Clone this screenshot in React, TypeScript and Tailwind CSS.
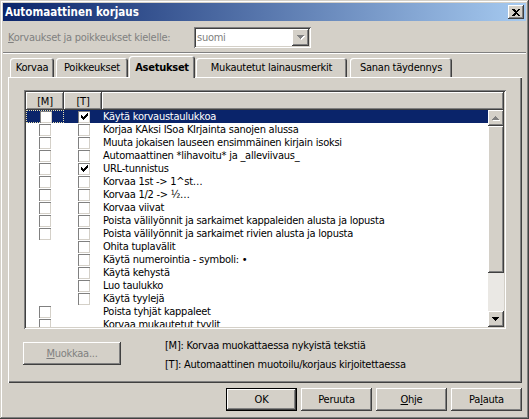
import React from 'react'

const frame =
  'shadow-[inset_-1px_-1px_#404040,inset_1px_1px_#d4d0c8,inset_-2px_-2px_#808080,inset_2px_2px_#ffffff]'
const raised =
  'shadow-[inset_-1px_-1px_#404040,inset_1px_1px_#ffffff,inset_-2px_-2px_#808080,inset_2px_2px_#d4d0c8]'
const sunken =
  'shadow-[inset_1px_1px_#808080,inset_-1px_-1px_#ffffff,inset_2px_2px_#404040,inset_-2px_-2px_#d4d0c8]'

const ROWS = [
  { text: 'Käytä korvaustaulukkoa', m: true, t: true, checked: true },
  { text: 'Korjaa KAksi ISoa KIrjainta sanojen alussa', m: true, t: true },
  { text: 'Muuta jokaisen lauseen ensimmäinen kirjain isoksi', m: true, t: true },
  { text: 'Automaattinen *lihavoitu* ja _alleviivaus_', m: true, t: true },
  { text: 'URL-tunnistus', m: true, t: true, checked: true },
  { text: 'Korvaa 1st -> 1^st…', m: true, t: true },
  { text: 'Korvaa 1/2 -> ½…', m: true, t: true },
  { text: 'Korvaa viivat', m: true, t: true },
  { text: 'Poista välilyönnit ja sarkaimet kappaleiden alusta ja lopusta', m: true, t: true },
  { text: 'Poista välilyönnit ja sarkaimet rivien alusta ja lopusta', m: true, t: true },
  { text: 'Ohita tuplavälit', m: false, t: true },
  { text: 'Käytä numerointia - symboli: •', m: false, t: true },
  { text: 'Käytä kehystä', m: false, t: true },
  { text: 'Luo taulukko', m: false, t: true },
  { text: 'Käytä tyylejä', m: false, t: true },
  { text: 'Poista tyhjät kappaleet', m: true, t: false },
  { text: 'Korvaa mukautetut tyylit', m: true, t: false },
]

// classic 7x7 check glyph
const CHECK = ['......#', '.....##', '#...###', '##.###.', '#####..', '.###...', '..#....']

function CheckMark() {
  return (
    <svg width="7" height="7" viewBox="0 0 7 7" shapeRendering="crispEdges" className="block">
      {CHECK.flatMap((line, y) =>
        line.split('').map((c, x) => (c === '#' ? <rect key={`${x}-${y}`} x={x} y={y} width="1" height="1" fill="#000" /> : null)),
      )}
    </svg>
  )
}

function Checkbox({ checked }: { checked?: boolean }) {
  return (
    <div className="w-[12px] h-[12px] bg-white shadow-[inset_1px_1px_#808080,inset_-1px_-1px_#d4d0c8] flex items-center justify-center">
      {checked && <CheckMark />}
    </div>
  )
}

function Arrow({ dir, disabled }: { dir: 'up' | 'down'; disabled?: boolean }) {
  const pts = dir === 'up' ? '3.5,0 7,4 0,4' : '0,0 7,0 3.5,4'
  return (
    <svg width="8" height="5" viewBox="0 0 8 5" shapeRendering="crispEdges" className="block">
      {disabled && <polygon points={pts} fill="#fff" transform="translate(1,1)" />}
      <polygon points={pts} fill={disabled ? '#808080' : '#000'} />
    </svg>
  )
}

function Button({ children, w, isDefault, disabled }: { children: React.ReactNode; w: string; isDefault?: boolean; disabled?: boolean }) {
  return (
    <div className={`${w} h-[23px] ${isDefault ? 'border border-black' : ''} flex`}>
      <div className={`flex-1 flex items-center justify-center ${raised} ${disabled ? 'text-[#808080]' : ''}`}>{children}</div>
    </div>
  )
}

export default function App() {
  return (
    <div
      className={`w-[529px] h-[419px] bg-[#d4d0c8] p-[3px] flex flex-col ${frame} font-['DejaVu_Sans_Condensed','Liberation_Sans',sans-serif] text-[11px] leading-[13px] tracking-[-0.25px] text-black select-none overflow-hidden`}
    >
      {/* title bar */}
      <div className="h-[18px] shrink-0 bg-[linear-gradient(to_right,#0a246a,#a6caf0)] flex items-center pl-[2px] pr-[2px]">
        <span className="text-white font-bold text-[11.5px] tracking-normal">Automaattinen korjaus</span>
        <div className={`ml-auto w-[16px] h-[14px] ${raised} bg-[#d4d0c8] flex items-center justify-center`}>
          <svg width="8" height="7" viewBox="0 0 8 7" shapeRendering="crispEdges" className="block">
            <path d="M0 0h2l2 2 2-2h2v1L5 3.5 8 6v1H6L4 5 2 7H0V6l3-2.5L0 1z" fill="#000" />
          </svg>
        </div>
      </div>

      {/* language row */}
      <div className="flex items-center h-[21px] mt-[6px] pl-[5px] shrink-0">
        <span className="w-[186px] text-[#808080]">
          <span className="underline">K</span>orvaukset ja poikkeukset kielelle:
        </span>
        <div className={`w-[117px] h-[21px] bg-white ${sunken} p-[2px] flex items-center`}>
          <span className="flex-1 pl-[1px] text-[#808080]">suomi</span>
          <div className={`w-[17px] h-[17px] bg-[#d4d0c8] ${raised} flex items-center justify-center`}>
            <Arrow dir="down" disabled />
          </div>
        </div>
      </div>

      <div className="mt-[4px] h-[2px] shrink-0 border-t border-t-[#808080] border-b border-b-white" />

      {/* tabs */}
      <div className="mt-[2px] h-[21px] shrink-0 flex items-end pl-[7px]">
        {[
          { label: 'Korvaa', w: 'w-[44px]', ml: 'ml-0' },
          { label: 'Poikkeukset', w: 'w-[72px]', ml: 'ml-[2px]' },
          { label: 'Asetukset', w: 'w-[66px]', ml: 'ml-[1px]', active: true },
          { label: 'Mukautetut lainausmerkit', w: 'w-[151px]', ml: 'ml-[1px]' },
          { label: 'Sanan täydennys', w: 'w-[102px]', ml: 'ml-[3px]' },
        ].map((t) => (
          <div
            key={t.label}
            className={`${t.w} ${t.ml} ${t.active ? 'h-[22px] -mb-px relative z-10 font-bold' : 'h-[19px]'} bg-[#d4d0c8] rounded-t-[3px] shadow-[inset_1px_1px_#ffffff,inset_-1px_0_#404040,inset_-2px_0_#808080] flex items-center justify-center`}
          >
            {t.label}
          </div>
        ))}
      </div>

      {/* panel */}
      <div className="ml-[5px] w-[514px] h-[306px] shrink-0 shadow-[inset_1px_1px_#ffffff,inset_-1px_-1px_#404040,inset_-2px_-2px_#808080] flex flex-col">
        <div className={`mt-[13px] ml-[16px] w-[482px] h-[239px] bg-white ${sunken} p-[2px] flex flex-col`}>
          {/* header */}
          <div className="h-[18px] shrink-0 flex bg-[#d4d0c8]">
            {['[M]', '[T]', ''].map((h, i) => (
              <div key={i} className={`${i < 2 ? 'w-[38px]' : 'flex-1'} h-full ${raised} flex items-center justify-center`}>
                {h}
              </div>
            ))}
          </div>
          <div className="flex-1 flex min-h-0">
            <div className="flex-1 overflow-hidden">
              {ROWS.map((r, i) => {
                const sel = i === 0
                return (
                  <div key={i} className={`h-[13px] flex ${sel ? 'bg-[#0a246a] text-white' : ''}`}>
                    <div className={`w-[38px] h-full pl-[13px] flex items-center ${sel ? 'border border-dotted border-[#e8e0b0]' : ''}`}>
                      {r.m && <Checkbox />}
                    </div>
                    <div className="w-[38px] h-full pl-[14px] flex items-center">{r.t && <Checkbox checked={r.checked} />}</div>
                    <div className="flex-1 pl-[1px] whitespace-nowrap">{r.text}</div>
                  </div>
                )
              })}
            </div>
            {/* scrollbar */}
            <div className="w-[16px] flex flex-col bg-[#eae8e4]">
              <div className={`h-[16px] shrink-0 bg-[#d4d0c8] ${raised} flex items-center justify-center`}>
                <Arrow dir="up" disabled />
              </div>
              <div className={`h-[147px] shrink-0 bg-[#d4d0c8] ${raised}`} />
              <div className="flex-1" />
              <div className={`h-[16px] shrink-0 bg-[#d4d0c8] ${raised} flex items-center justify-center`}>
                <Arrow dir="down" />
              </div>
            </div>
          </div>
        </div>

        <div className="mt-[10px] ml-[15px] flex items-start">
          <div className="mt-[3px]">
            <Button w="w-[98px]" disabled>
              <span>
                <span className="underline">M</span>uokkaa...
              </span>
            </Button>
          </div>
          <div className="ml-[44px] flex flex-col gap-[6px]">
            <span>[M]: Korvaa muokattaessa nykyistä tekstiä</span>
            <span>[T]: Automaattinen muotoilu/korjaus kirjoitettaessa</span>
          </div>
        </div>
      </div>

      {/* dialog buttons */}
      <div className="mt-[5px] flex justify-end gap-[4px] pr-[4px]">
        <Button w="w-[71px]" isDefault>
          OK
        </Button>
        <Button w="w-[71px]">Peruuta</Button>
        <Button w="w-[71px]">
          <span>
            <span className="underline">O</span>hje
          </span>
        </Button>
        <Button w="w-[71px]">
          <span>
            Pa<span className="underline">l</span>auta
          </span>
        </Button>
      </div>
    </div>
  )
}
